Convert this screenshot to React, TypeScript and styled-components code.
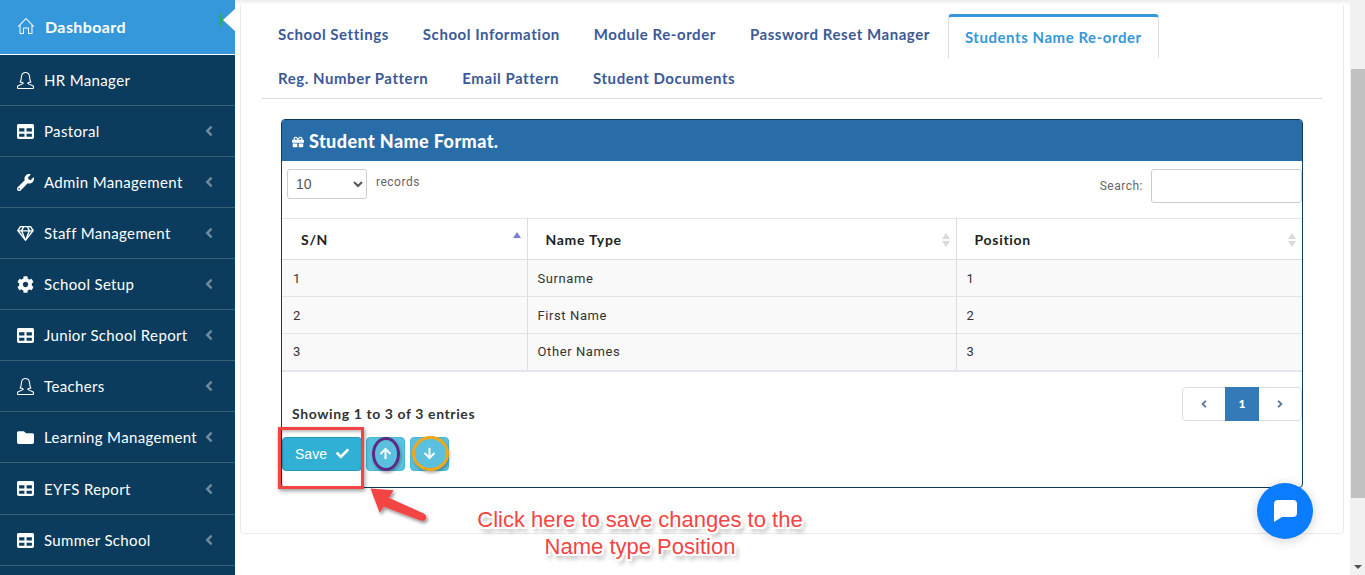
import styled, { createGlobalStyle } from 'styled-components';
import { FaAngleLeft, FaAngleRight, FaArrowDown, FaArrowUp, FaCheck, FaCog, FaFolder, FaGift, FaRegGem, FaTable, FaWrench } from 'react-icons/fa';
import { SlHome, SlUserFemale } from 'react-icons/sl';
import type { ReactNode } from 'react';

const GlobalStyle = createGlobalStyle`
  html, body {
    margin: 0;
    height: 575px;
    overflow: hidden;
    background: #fff;
    font-family: "Lato", "Open Sans", sans-serif;
  }
  * { box-sizing: border-box; }
`;

const menu: { label: string; icon: ReactNode; arrow?: boolean; tall?: boolean }[] = [
  { label: 'HR Manager', icon: <SlUserFemale /> },
  { label: 'Pastoral', icon: <FaTable />, arrow: true },
  { label: 'Admin Management', icon: <FaWrench />, arrow: true },
  { label: 'Staff Management', icon: <FaRegGem />, arrow: true },
  { label: 'School Setup', icon: <FaCog />, arrow: true },
  { label: 'Junior School Report', icon: <FaTable />, arrow: true },
  { label: 'Teachers', icon: <SlUserFemale />, arrow: true },
  { label: 'Learning Management', icon: <FaFolder />, arrow: true },
  { label: 'EYFS Report', icon: <FaTable />, arrow: true, tall: true },
  { label: 'Summer School', icon: <FaTable />, arrow: true },
];

const rows = [
  ['1', 'Surname', '1'],
  ['2', 'First Name', '2'],
  ['3', 'Other Names', '3'],
];

const App = () => {
  return (
    <>
      <GlobalStyle />
      <Page>
        <Sidebar>
          <DashboardItem>
            <SlHome />
            <span>Dashboard</span>
            <ActiveNotch />
          </DashboardItem>
          {menu.map((m) => (
            <MenuItem key={m.label} $tall={m.tall}>
              <MenuIcon>{m.icon}</MenuIcon>
              <MenuLabel>{m.label}</MenuLabel>
              {m.arrow && <Chevron><FaAngleLeft /></Chevron>}
            </MenuItem>
          ))}
        </Sidebar>
        <Main>
          <TopShadow />
          <Card>
            <Tabs>
              <Tab>School Settings</Tab>
              <Tab>School Information</Tab>
              <Tab>Module Re-order</Tab>
              <Tab>Password Reset Manager</Tab>
              <ActiveTab>Students Name Re-order</ActiveTab>
              <Tab>Reg. Number Pattern</Tab>
              <Tab>Email Pattern</Tab>
              <Tab>Student Documents</Tab>
            </Tabs>
            <Panel>
              <PanelHead>
                <FaGift />
                <span>Student Name Format.</span>
              </PanelHead>
              <Controls>
                <LengthGroup>
                  <LengthSelect defaultValue="10">
                    <option>10</option>
                  </LengthSelect>
                  <Records>records</Records>
                </LengthGroup>
                <SearchGroup>
                  <label htmlFor="search">Search:</label>
                  <SearchInput id="search" />
                </SearchGroup>
              </Controls>
              <Table>
                <colgroup>
                  <col width="245" />
                  <col width="429" />
                  <col />
                </colgroup>
                <thead>
                  <tr>
                    <Th $pad={19}>S/N<SortUp /></Th>
                    <Th $pad={18}>Name Type<Sort /></Th>
                    <Th $pad={18}>Position<Sort /></Th>
                  </tr>
                </thead>
                <tbody>
                  {rows.map((r) => (
                    <tr key={r[0]}>
                      {r.map((c, i) => (
                        <Td key={i}>{c}</Td>
                      ))}
                    </tr>
                  ))}
                </tbody>
              </Table>
              <FooterRow>
                <Showing>Showing 1 to 3 of 3 entries</Showing>
                <Pager>
                  <PageLink><FaAngleLeft /></PageLink>
                  <PageCurrent>1</PageCurrent>
                  <PageLink><FaAngleRight /></PageLink>
                </Pager>
              </FooterRow>
              <Actions>
                <SaveButton>Save <FaCheck /></SaveButton>
                <MoveButton><FaArrowUp /></MoveButton>
                <MoveButton><FaArrowDown /></MoveButton>
              </Actions>
            </Panel>
          </Card>
        </Main>
        <Scrollbar>
          <Thumb />
          <ScrollArrow />
        </Scrollbar>
      </Page>

      <SaveMark />
      <UpMark />
      <DownMark />
      <ArrowMark viewBox="0 0 90 60">
        <defs>
          <filter id="s" x="-20%" y="-20%" width="150%" height="150%">
            <feDropShadow dx="2" dy="3" stdDeviation="2" floodColor="#000" floodOpacity="0.4" />
          </filter>
        </defs>
        <path
          d="M6 3 L34 5 L28 14 L70 33 Q75 36 72 40 Q70 43 65 41 L22 25 L17 32 Z"
          fill="#f44444"
          filter="url(#s)"
        />
      </ArrowMark>
      <Callout>
        Click here to save changes to the
        <br />
        Name type Position
      </Callout>
      <ChatBubble>
        <svg width="26" height="24" viewBox="0 0 26 24">
          <path
            d="M6 1 H21 Q25 1 25 5 V14 Q25 18 21 18 H10 L2 23 V5 Q2 1 6 1 Z"
            fill="#fff"
          />
        </svg>
      </ChatBubble>
    </>
  );
};

export default App;

const Page = styled.div`
  display: flex;
  width: 1365px;
  height: 575px;
  overflow: hidden;
`;

const Sidebar = styled.nav`
  flex: 0 0 235px;
  background: #0b3c5d;
  color: #fff;
`;

const DashboardItem = styled.div`
  position: relative;
  display: flex;
  align-items: center;
  gap: 11px;
  height: 55px;
  padding: 0 0 2px 18px;
  background: #3498db;
  border-bottom: 1px solid #fff;
  font-size: 16px;
  font-weight: 700;
  letter-spacing: 0.4px;
  svg { font-size: 16px; }
`;

const ActiveNotch = styled.i`
  position: absolute;
  right: 0;
  top: 9px;
  width: 0;
  height: 0;
  border-style: solid;
  border-width: 11px 12px 11px 0;
  border-color: transparent #fff transparent transparent;
  &::before {
    content: '';
    position: absolute;
    left: -4px;
    top: -11px;
    border-style: solid;
    border-width: 11px 0 11px 4px;
    border-color: transparent transparent transparent #27ae60;
  }
`;

const MenuItem = styled.div<{ $tall?: boolean }>`
  display: flex;
  align-items: center;
  height: ${({ $tall }) => ($tall ? '52px' : '51px')};
  padding: 0 18px 0 17px;
  border-bottom: 1px solid #3a6078;
`;

const MenuIcon = styled.span`
  display: flex;
  flex: 0 0 27px;
  font-size: 17px;
`;

const MenuLabel = styled.span`
  flex: 1;
  font-size: 15px;
  letter-spacing: 0.35px;
  white-space: nowrap;
`;

const Chevron = styled.span`
  display: flex;
  color: #70899b;
  font-size: 16px;
`;

const Main = styled.main`
  position: relative;
  flex: 1;
  padding: 0 6px 0 5px;
  background: #fff;
`;

const TopShadow = styled.div`
  position: absolute;
  top: 0;
  left: 0;
  right: 0;
  height: 5px;
  background: linear-gradient(#ececec, #fff);
`;

const Card = styled.section`
  height: 534px;
  padding: 14px 21px 0;
  background: #fff;
  border: 1px solid #ececec;
  border-top: 0;
  border-radius: 0 0 4px 4px;
`;

const Tabs = styled.div`
  display: flex;
  flex-wrap: wrap;
  width: 100%;
  height: 85px;
  align-content: flex-start;
  border-bottom: 1px solid #ddd;
`;

const Tab = styled.div`
  height: 42px;
  padding: 11px 16px 0;
  margin-right: 2px;
  color: #3b5998;
  font-family: "Lato", sans-serif;
  font-size: 15px;
  font-weight: 700;
  letter-spacing: 0.55px;
  white-space: nowrap;
`;

const ActiveTab = styled(Tab)`
  height: 44px;
  padding-top: 11px;
  color: #3498db;
  background: #fff;
  border: 1px solid #ddd;
  border-top: 3px solid #3498db;
  border-bottom: 0;
  border-radius: 4px 4px 0 0;
  margin-right: 0;
`;

const Panel = styled.div`
  width: 1022px;
  height: 369px;
  margin: 20px 0 0 19px;
  background: #fff;
  border: 1px solid #0d3c5f;
  border-radius: 4px;
  overflow: hidden;
`;

const PanelHead = styled.div`
  display: flex;
  align-items: center;
  gap: 5px;
  height: 41px;
  padding: 0 10px;
  background: #286ca8;
  color: #fff;
  font-size: 18px;
  font-weight: 900;
  letter-spacing: 0.4px;
  svg { font-size: 12px; margin-top: 3px; }
`;

const Controls = styled.div`
  display: flex;
  justify-content: space-between;
  height: 57px;
  padding: 8px 0 0 5px;
`;

const LengthGroup = styled.div`
  display: flex;
  gap: 9px;
`;

const LengthSelect = styled.select`
  width: 80px;
  height: 30px;
  padding: 0 4px;
  background: #fff;
  border: 1px solid #ccc;
  border-radius: 3px;
  color: #555;
  font-family: "Liberation Sans", sans-serif;
  font-size: 14px;
`;

const Records = styled.span`
  margin-top: 6px;
  color: #666;
  font-family: "Roboto", sans-serif;
  font-size: 12px;
  letter-spacing: 0.5px;
`;

const SearchGroup = styled.div`
  display: flex;
  align-items: center;
  gap: 8px;
  height: 34px;
  color: #666;
  font-family: "Roboto", sans-serif;
  font-size: 12px;
  letter-spacing: 0.5px;
`;

const SearchInput = styled.input`
  width: 151px;
  height: 34px;
  border: 1px solid #ccc;
  border-radius: 3px;
  outline: none;
`;

const Table = styled.table`
  width: 100%;
  border-collapse: collapse;
  table-layout: fixed;
  border-top: 1px solid #e6e6e6;
  border-bottom: 2px solid #e4e8ec;
`;

const Th = styled.th<{ $pad: number }>`
  position: relative;
  height: 41px;
  padding: 0 0 0 ${({ $pad }) => $pad}px;
  border-left: 1px solid #ddd;
  border-bottom: 1px solid #ddd;
  color: #222;
  font-family: "Lato", sans-serif;
  font-size: 14px;
  font-weight: 700;
  letter-spacing: 0.7px;
  text-align: left;
  &:first-child { border-left: 0; }
`;

const Sort = styled.i`
  position: absolute;
  right: 6px;
  top: 14px;
  width: 8px;
  height: 14px;
  &::before, &::after {
    content: '';
    position: absolute;
    left: 0;
    border-left: 4px solid transparent;
    border-right: 4px solid transparent;
  }
  &::before { top: 0; border-bottom: 6px solid #d9d9d9; }
  &::after { bottom: 0; border-top: 6px solid #d9d9d9; }
`;

const SortUp = styled(Sort)`
  &::before { border-bottom-color: #7a7fd6; top: -1px; }
  &::after { display: none; }
`;

const Td = styled.td`
  height: 37px;
  padding: 0 0 0 10px;
  background: #f9f9f9;
  border-left: 1px solid #ddd;
  border-bottom: 1px solid #e4e4e4;
  color: #333;
  font-family: "Roboto", sans-serif;
  font-size: 13px;
  letter-spacing: 0.6px;
  &:first-child { border-left: 0; padding-left: 11px; }
`;

const FooterRow = styled.div`
  display: flex;
  justify-content: space-between;
  height: 65px;
  padding: 15px 0 0 10px;
`;

const Showing = styled.div`
  margin-top: 18px;
  color: #333;
  font-size: 14px;
  font-weight: 700;
  letter-spacing: 0.6px;
`;

const Pager = styled.div`
  display: flex;
  height: 34px;
  border: 1px solid #ddd;
  border-radius: 4px;
`;

const PageLink = styled.span`
  display: flex;
  align-items: center;
  justify-content: center;
  width: 42px;
  color: #5d7a96;
  font-size: 12px;
`;

const PageCurrent = styled(PageLink)`
  width: 34px;
  margin: -1px 0;
  background: #337ab7;
  color: #fff;
  font-weight: 900;
`;

const Actions = styled.div`
  display: flex;
  gap: 4px;
`;

const SaveButton = styled.button`
  display: flex;
  align-items: center;
  justify-content: center;
  gap: 9px;
  width: 80px;
  height: 34px;
  padding: 0;
  background: #31b0d5;
  border: 1px solid #269abc;
  border-radius: 4px;
  color: #fff;
  font-family: "Liberation Sans", sans-serif;
  font-size: 14px;
  svg { font-size: 13px; }
`;

const MoveButton = styled.button`
  display: flex;
  align-items: center;
  justify-content: center;
  width: 39px;
  height: 34px;
  padding: 0;
  background: #5bc0de;
  border: 1px solid #46b8da;
  border-radius: 4px;
  color: #fff;
  font-size: 13px;
  & + & { margin-left: 1px; }
`;

const Scrollbar = styled.div`
  position: relative;
  flex: 0 0 15px;
  padding-top: 69px;
  background: #f1f1f1;
`;

const Thumb = styled.div`
  height: 429px;
  margin-left: 1px;
  background: #c1c1c1;
`;

const ScrollArrow = styled.i`
  position: absolute;
  left: 4px;
  bottom: 6px;
  border-left: 4px solid transparent;
  border-right: 4px solid transparent;
  border-top: 4px solid #505050;
`;

const SaveMark = styled.div`
  position: absolute;
  left: 278px;
  top: 427px;
  width: 86px;
  height: 62px;
  border: 3px solid #f44444;
  box-shadow: 1px 2px 4px rgba(0, 0, 0, 0.4), inset 1px 2px 3px rgba(0, 0, 0, 0.25);
`;

const UpMark = styled.div`
  position: absolute;
  left: 372px;
  top: 437px;
  width: 28px;
  height: 34px;
  border: 3px solid #5b2a86;
  border-radius: 50%;
  box-shadow: 1px 2px 3px rgba(0, 0, 0, 0.3);
`;

const DownMark = styled.div`
  position: absolute;
  left: 412px;
  top: 436px;
  width: 37px;
  height: 35px;
  border: 3px solid #f0a818;
  border-radius: 50%;
  box-shadow: 1px 2px 3px rgba(0, 0, 0, 0.3);
`;

const ArrowMark = styled.svg`
  position: absolute;
  left: 363px;
  top: 486px;
  width: 80px;
  height: 50px;
  overflow: visible;
`;

const Callout = styled.div`
  position: absolute;
  left: 440px;
  top: 506px;
  width: 400px;
  color: #f44444;
  font-family: "Liberation Sans", sans-serif;
  font-size: 22px;
  line-height: 27px;
  text-align: center;
  text-shadow:
    -2px 0 0 #fff, 2px 0 0 #fff, 0 -2px 0 #fff, 0 2px 0 #fff,
    -2px -2px 0 #fff, 2px -2px 0 #fff, -2px 2px 0 #fff, 2px 2px 0 #fff,
    3px 5px 4px rgba(0, 0, 0, 0.4);
`;

const ChatBubble = styled.div`
  position: absolute;
  left: 1257px;
  top: 483px;
  display: flex;
  align-items: center;
  justify-content: center;
  width: 56px;
  height: 56px;
  background: #0a7cff;
  border-radius: 50%;
  box-shadow: 0 2px 12px rgba(0, 0, 0, 0.18);
`;
